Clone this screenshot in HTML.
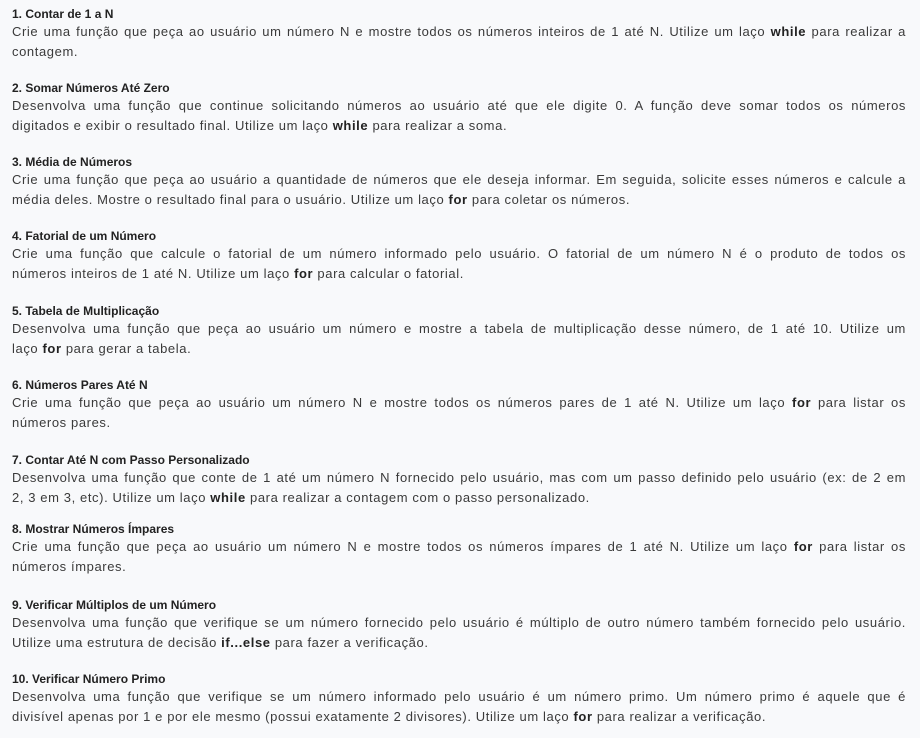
<!DOCTYPE html>
<html><head><meta charset="utf-8">
<style>
html,body{margin:0;padding:0;background:#f8f9fb;}
body{width:920px;height:738px;position:relative;overflow:hidden;font-family:"Liberation Sans",sans-serif;color:#3a3a3a;}
.b{position:absolute;left:12px;width:894px;}
.t{font-weight:bold;font-size:12px;line-height:16px;color:#222;}
.l{font-size:13px;letter-spacing:0.6px;line-height:20px;text-align:justify;text-align-last:justify;white-space:nowrap;}
.l.e{text-align-last:left;}
b{color:#222;}
</style></head><body>

<div class="b" style="top:6px"><div class="t">1. Contar de 1 a N</div>
<div class="l">Crie uma função que peça ao usuário um número N e mostre todos os números inteiros de 1 até N. Utilize um laço <b>while</b> para realizar a</div>
<div class="l e">contagem.</div></div>

<div class="b" style="top:80px"><div class="t">2. Somar Números Até Zero</div>
<div class="l">Desenvolva uma função que continue solicitando números ao usuário até que ele digite 0. A função deve somar todos os números</div>
<div class="l e">digitados e exibir o resultado final. Utilize um laço <b>while</b> para realizar a soma.</div></div>

<div class="b" style="top:154px"><div class="t">3. Média de Números</div>
<div class="l">Crie uma função que peça ao usuário a quantidade de números que ele deseja informar. Em seguida, solicite esses números e calcule a</div>
<div class="l e">média deles. Mostre o resultado final para o usuário. Utilize um laço <b>for</b> para coletar os números.</div></div>

<div class="b" style="top:228px"><div class="t">4. Fatorial de um Número</div>
<div class="l">Crie uma função que calcule o fatorial de um número informado pelo usuário. O fatorial de um número N é o produto de todos os</div>
<div class="l e">números inteiros de 1 até N. Utilize um laço <b>for</b> para calcular o fatorial.</div></div>

<div class="b" style="top:303px"><div class="t">5. Tabela de Multiplicação</div>
<div class="l">Desenvolva uma função que peça ao usuário um número e mostre a tabela de multiplicação desse número, de 1 até 10. Utilize um</div>
<div class="l e">laço <b>for</b> para gerar a tabela.</div></div>

<div class="b" style="top:377px"><div class="t">6. Números Pares Até N</div>
<div class="l">Crie uma função que peça ao usuário um número N e mostre todos os números pares de 1 até N. Utilize um laço <b>for</b> para listar os</div>
<div class="l e">números pares.</div></div>

<div class="b" style="top:452px"><div class="t">7. Contar Até N com Passo Personalizado</div>
<div class="l">Desenvolva uma função que conte de 1 até um número N fornecido pelo usuário, mas com um passo definido pelo usuário (ex: de 2 em</div>
<div class="l e">2, 3 em 3, etc). Utilize um laço <b>while</b> para realizar a contagem com o passo personalizado.</div></div>

<div class="b" style="top:521px"><div class="t">8. Mostrar Números Ímpares</div>
<div class="l">Crie uma função que peça ao usuário um número N e mostre todos os números ímpares de 1 até N. Utilize um laço <b>for</b> para listar os</div>
<div class="l e">números ímpares.</div></div>

<div class="b" style="top:597px"><div class="t">9. Verificar Múltiplos de um Número</div>
<div class="l">Desenvolva uma função que verifique se um número fornecido pelo usuário é múltiplo de outro número também fornecido pelo usuário.</div>
<div class="l e">Utilize uma estrutura de decisão <b>if...else</b> para fazer a verificação.</div></div>

<div class="b" style="top:671px"><div class="t">10. Verificar Número Primo</div>
<div class="l">Desenvolva uma função que verifique se um número informado pelo usuário é um número primo. Um número primo é aquele que é</div>
<div class="l e">divisível apenas por 1 e por ele mesmo (possui exatamente 2 divisores). Utilize um laço <b>for</b> para realizar a verificação.</div></div>

</body></html>
